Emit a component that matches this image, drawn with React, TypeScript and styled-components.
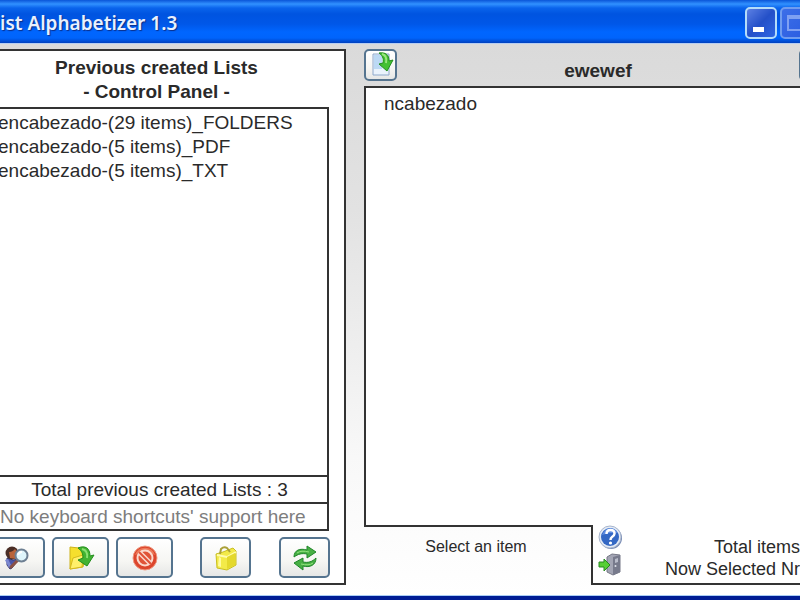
import React from 'react';
import styled, { createGlobalStyle } from 'styled-components';

const GlobalStyle = createGlobalStyle`
  * { box-sizing: border-box; }
  body { margin: 0; font-family: "Liberation Sans", Arial, sans-serif; color: #2a2a2a; }
  button { font: inherit; color: inherit; cursor: pointer; }
`;

const Window = styled.div`
  min-height: 100vh;
  display: grid;
  grid-template-rows: auto 1fr;
  overflow: hidden;
  border-bottom: 4px solid #001c94;
  background: #fff;
`;

const TitleBar = styled.header`
  height: 44px;
  display: flex;
  align-items: center;
  justify-content: space-between;
  overflow: hidden;
  padding-top: 3px;
  border-bottom: 1px solid #b5cdf2;
  background: linear-gradient(#0a55d8 0, #3191ff 4px, #0a64ec 8px, #0054e0 14px, #0057e8 24px, #0066ff 32px, #0064fc 38px, #0040bd 43px);
`;

const WindowTitle = styled.h1`
  margin: 0;
  font: 600 19px/24px "Noto Sans", sans-serif;
  color: #e9f1ff;
  text-shadow: 1px 1px 1px #0a2f8a;
  white-space: nowrap;
`;

const WindowControls = styled.div`
  display: flex;
  gap: 3px;
  margin-right: -12px;
`;

const ControlButton = styled.button<{ $dim?: boolean }>`
  width: 32px;
  height: 32px;
  padding: 0;
  border: 2px solid ${p => (p.$dim ? '#6f9cf0' : '#b4dcfa')};
  border-radius: 5px;
  background: ${p => (p.$dim
    ? 'linear-gradient(135deg, #3c6ee8, #2a5ce0)'
    : 'linear-gradient(135deg, #5c80e4, #2450c8 50%, #2e66e4)')};
  svg { display: block; }
`;

const Workspace = styled.main`
  display: grid;
  grid-template-columns: 346px minmax(0, 1fr);
  column-gap: 18px;
  padding: 5px 0 10px;
  border-bottom: 1px solid #a9cdf5;
  background: linear-gradient(#dadada, #e2e2e2 30%, #f8f8f8 75%, #fff);
`;

const ControlPanel = styled.section`
  display: flex;
  flex-direction: column;
  padding: 5px 15px 5px 0;
  overflow: hidden;
  border: 2px solid #333;
  border-left: 0;
  background: #fff;
`;

const PanelTitle = styled.h2`
  margin: 0 0 3px;
  padding-right: 16px;
  align-self: center;
  font-size: 19px;
  line-height: 24px;
  text-align: center;
`;

const ListFrame = styled.div`
  flex: 1;
  display: flex;
  flex-direction: column;
  border: 2px solid #333;
  border-left: 0;
`;

const ItemList = styled.ul`
  flex: 1;
  margin: 0 0 0 -2px;
  padding: 2px 0;
  list-style: none;
`;

const ListEntry = styled.button`
  display: block;
  width: 100%;
  padding: 0;
  border: 0;
  background: none;
  font-size: 19px;
  line-height: 24px;
  text-align: left;
  white-space: nowrap;
`;

const FrameRow = styled.p<{ $muted?: boolean }>`
  margin: 0;
  border-top: 2px solid #333;
  font-size: 19px;
  line-height: 25px;
  text-align: ${p => (p.$muted ? 'left' : 'center')};
  padding-right: ${p => (p.$muted ? 0 : 8)}px;
  color: ${p => (p.$muted ? '#7d7d7d' : '#2a2a2a')};
  white-space: nowrap;
`;

const Toolbar = styled.div`
  display: flex;
  justify-content: space-between;
  margin: 6px -1px 0 -12px;
`;

const ToolGroup = styled.div<{ $gap: number }>`
  display: flex;
  gap: ${p => p.$gap}px;
`;

const ToolButton = styled.button<{ $width: number; $height?: number }>`
  width: ${p => p.$width}px;
  height: ${p => p.$height ?? 41}px;
  flex: none;
  display: flex;
  align-items: center;
  justify-content: center;
  padding: 0;
  border: 2px solid #55748f;
  border-radius: 5px;
  background: linear-gradient(#fff, #f6f6f3 60%, #e6e7e6);
  svg { flex: none; }
`;

const ListPanel = styled.section`
  display: flex;
  flex-direction: column;
`;

const ListHeader = styled.div`
  display: flex;
  justify-content: space-between;
  align-items: flex-start;
  margin-right: -32px;
`;

const ListTitle = styled.h2`
  margin: 10px 0 3px;
  font-size: 19px;
  line-height: 24px;
`;

const Contents = styled.div`
  flex: 1;
  padding: 4px 18px;
  border: 2px solid #333;
  border-width: 2px 0 0 2px;
  background: #fff;
`;

const Footer = styled.footer`
  display: grid;
  grid-template-columns: 227px minmax(0, 1fr);
`;

const Hint = styled.p`
  margin: 0;
  padding: 10px 3px 0 0;
  border-top: 2px solid #333;
  font-size: 16px;
  line-height: 20px;
  text-align: center;
`;

const Status = styled.div`
  display: flex;
  justify-content: space-between;
  border: 2px solid #333;
  border-width: 0 0 2px 2px;
  background: #fff;
`;

const StatusIcons = styled.div`
  display: flex;
  flex-direction: column;
  gap: 3px;
  padding: 0 0 5px 5px;
`;

const IconButton = styled.button`
  width: 26px;
  height: 25px;
  padding: 0;
  border: 0;
  background: none;
  svg { display: block; }
`;

const Totals = styled.div`
  padding-top: 11px;
  font-size: 18px;
  line-height: 22px;
  text-align: right;
  white-space: nowrap;
`;

const SearchIcon = () => (
  <svg width="28" height="28" viewBox="0 0 28 28">
    <path d="M4 14l6 2 6-1-7 9-2 1-3-4z" fill="#4a54a8" stroke="#34386e" />
    <path d="M2 16l4 8 2-3-3-6z" fill="#7b88d0" />
    <circle cx="9" cy="9" r="6.5" fill="#4a2e26" />
    <path d="M6 8c3 0 5-2 6-3l3 4-2 6-6-1z" fill="#b9643a" />
    <path d="M15 16l-7 7" stroke="#8a5146" strokeWidth="3" strokeLinecap="round" />
    <circle cx="18.500" cy="11.500" r="6" fill="#dff5fb" stroke="#6d7f92" strokeWidth="2" />
    <path d="M15 11q1-3 4-3" fill="none" stroke="#fff" strokeWidth="2" />
  </svg>
);

const FolderOpenIcon = () => (
  <svg width="28" height="26" viewBox="0 0 28 26">
    <path d="M3 2l9 1 3 3 4 1-3 15-13 2z" fill="#f5df2e" stroke="#cdb31b" />
    <path d="M3 24l3-11 10-3-1 12z" fill="#fff06a" stroke="#d5b91d" />
    <path d="M11 3c7-3 12 0 12 8l4-1-7 11-9-6 5-2c0-4-1-7-5-10z" fill="#43b332" stroke="#238f1d" />
    <path d="M15 4c4 1 6 4 5 9" fill="none" stroke="#8be071" strokeWidth="2" />
  </svg>
);

const ForbidIcon = () => (
  <svg width="26" height="26" viewBox="0 0 26 26">
    <circle cx="13" cy="13" r="12" fill="#dc452c" stroke="#ef9a82" />
    <path d="M3 10a10.500 10.500 0 0 1 20 0q-10-5-20 0z" fill="#ec7858" />
    <circle cx="13" cy="13" r="7.500" fill="#e05438" stroke="#fad9cd" strokeWidth="2" />
    <path d="M8 8l10 10" stroke="#fad9cd" strokeWidth="5" />
    <path d="M7 7l12 12" stroke="#df5137" strokeWidth="2" />
  </svg>
);

const BagIcon = () => (
  <svg width="26" height="26" viewBox="0 0 26 26">
    <path d="M3 9l7-2 10-4 3 3v14l-9 5-10-2z" fill="#f3ea48" stroke="#c9bf22" />
    <path d="M4 10l10 2 9-5" fill="none" stroke="#fffcae" strokeWidth="2" />
    <path d="M14 12l8-4v12l-8 4z" fill="#e4d92c" />
    <path d="M6 12l2 1v9l-3-1z" fill="#fffba0" />
    <path d="M7 9l1-5q3-3 6-1l3 4" fill="none" stroke="#aaa038" strokeWidth="2" />
  </svg>
);

const RefreshIcon = () => (
  <svg width="26" height="26" viewBox="0 0 26 26">
    <path d="M2 12C2 5 8 3 15 5V1l9 6-9 6V9c-5-1-9 0-13 3z" fill="#48b044" stroke="#20862a" />
    <path d="M24 13c0 7-6 10-13 8v4l-9-7 9-5v4c5 1 9 0 13-4z" fill="#48b044" stroke="#20862a" />
    <path d="M5 8q4-3 12-1M21 18q-4 3-12 1" fill="none" stroke="#93e27f" />
  </svg>
);

const ImportIcon = () => (
  <svg width="28" height="28" viewBox="0 0 28 28">
    <path d="M6 3h16v21H6z" fill="#eaf3fc" stroke="#8ea8cb" />
    <path d="M7 4h8v14H7z" fill="#bcd9f4" />
    <path d="M12 2c7-1 10 2 10 8l4-1-6 11-8-7 4-1c1-5-1-8-4-10z" fill="#43c032" stroke="#238f1d" />
    <path d="M15 3c4 1 5 4 4 9" fill="none" stroke="#9ae67f" strokeWidth="2" />
  </svg>
);

const HelpIcon = () => (
  <svg width="26" height="25" viewBox="0 0 26 25">
    <circle cx="13" cy="13" r="11" fill="#7488b2" />
    <circle cx="12" cy="12" r="11" fill="#e4ebf5" stroke="#a9b6cd" />
    <circle cx="12" cy="12" r="9" fill="#3468c4" />
    <path d="M4 10q3-7 9-7 5 1 7 5-8-1-16 2z" fill="#608de0" />
    <path d="M8.500 9q0-4 4-4 4 0 4 3.500 0 2-2.500 3.500-1.500 1-1.500 3" fill="none" stroke="#fff" strokeWidth="2.500" />
    <circle cx="12.500" cy="18" r="1.600" fill="#fff" />
  </svg>
);

const ExitIcon = () => (
  <svg width="26" height="25" viewBox="0 0 26 25">
    <path d="M9 4l5-3 8 1v17l-7 3-6-3z" fill="#a3a5b4" stroke="#777987" />
    <path d="M15 4l7-2v17l-7 3z" fill="#777a8c" />
    <path d="M17 6l3-1v4l-3 1z" fill="#b9bcca" />
    <circle cx="17.500" cy="13" r="1" fill="#dfe1ea" />
    <path d="M1 9h5V6l6 6-6 6v-4H1z" fill="#57cf35" stroke="#268b1e" />
  </svg>
);

const lists = [
  'encabezado-(29 items)_FOLDERS',
  'encabezado-(5 items)_PDF',
  'encabezado-(5 items)_TXT',
];

export default function App() {
  return (
    <>
      <GlobalStyle />
      <Window>
        <TitleBar>
          <WindowTitle>ist Alphabetizer 1.3</WindowTitle>
          <WindowControls>
            <ControlButton aria-label="Minimize">
              <svg width="28" height="28" viewBox="0 0 28 28"><path d="M6 18h11v5H6z" fill="#fff" /></svg>
            </ControlButton>
            <ControlButton $dim aria-label="Maximize">
              <svg width="28" height="28" viewBox="0 0 28 28"><path d="M6 7h16v14H6zM6 9h16" fill="none" stroke="#7fa0f2" strokeWidth="2" /></svg>
            </ControlButton>
          </WindowControls>
        </TitleBar>
        <Workspace>
          <ControlPanel>
            <PanelTitle>Previous created Lists<br />- Control Panel -</PanelTitle>
            <ListFrame>
              <ItemList>
                {lists.map(name => (
                  <li key={name}><ListEntry>{name}</ListEntry></li>
                ))}
              </ItemList>
              <FrameRow>Total previous created Lists : 3</FrameRow>
              <FrameRow $muted>No keyboard shortcuts' support here</FrameRow>
            </ListFrame>
            <Toolbar>
              <ToolGroup $gap={7}>
                <ToolButton $width={57} aria-label="View list"><SearchIcon /></ToolButton>
                <ToolButton $width={57} aria-label="Open list"><FolderOpenIcon /></ToolButton>
                <ToolButton $width={57} aria-label="Delete list"><ForbidIcon /></ToolButton>
              </ToolGroup>
              <ToolGroup $gap={28}>
                <ToolButton $width={51} aria-label="Folder"><BagIcon /></ToolButton>
                <ToolButton $width={51} aria-label="Refresh"><RefreshIcon /></ToolButton>
              </ToolGroup>
            </Toolbar>
          </ControlPanel>
          <ListPanel>
            <ListHeader>
              <ToolButton $width={33} $height={32} aria-label="Import"><ImportIcon /></ToolButton>
              <ListTitle>ewewef</ListTitle>
              <ToolButton $width={33} $height={32} aria-label="Export" />
            </ListHeader>
            <Contents>
              <ListEntry>ncabezado</ListEntry>
            </Contents>
            <Footer>
              <Hint>Select an item</Hint>
              <Status>
                <StatusIcons>
                  <IconButton aria-label="Help"><HelpIcon /></IconButton>
                  <IconButton aria-label="Exit"><ExitIcon /></IconButton>
                </StatusIcons>
                <Totals>Total items<br />Now Selected Nr</Totals>
              </Status>
            </Footer>
          </ListPanel>
        </Workspace>
      </Window>
    </>
  );
}
